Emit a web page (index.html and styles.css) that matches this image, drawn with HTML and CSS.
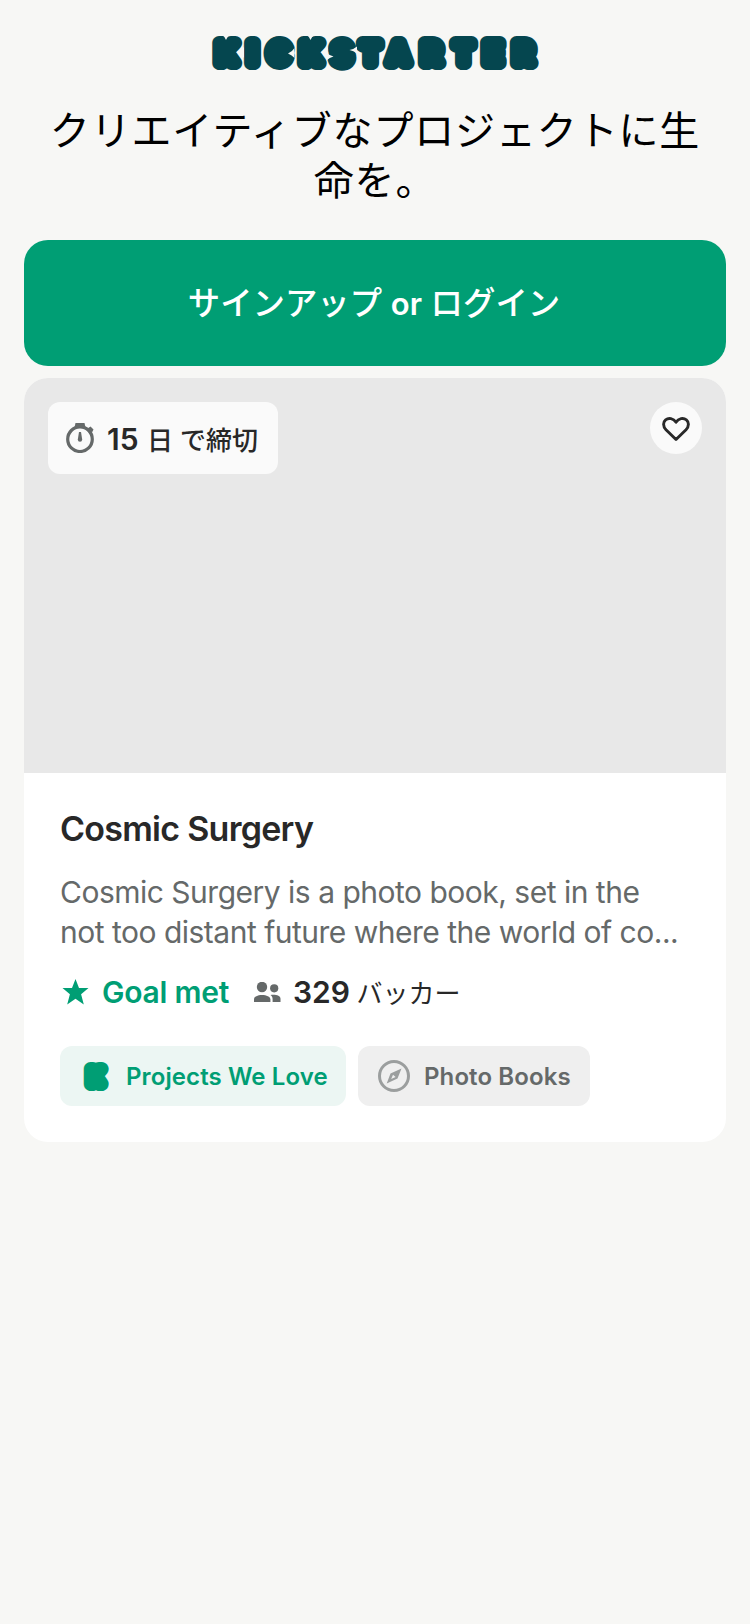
FILE: index.html
```html
<!DOCTYPE html>
<html lang="ja">
<head>
<meta charset="utf-8">
<title>Kickstarter</title>
<link rel="stylesheet" href="styles.css">
</head>
<body>
<main class="page">
  <svg class="logo" viewBox="0 0 330 36" role="img" aria-label="Kickstarter">
    <text class="wordmark" y="28.100" x="16.500 42.500 69 101 132 160.500 188.500 221.500 253.500 283 313.500">KICKSTARTER</text>
    <g class="notches">
      <path d="M12.500 0Q15 2 16 5Q17 2 19.500 0Z"/>
      <path d="M34 12Q30.500 16 26.500 17Q30.500 19 34 23Z"/>
      <path d="M97 0Q99.500 2 100.500 5Q101.500 2 104 0Z"/>
      <path d="M118 12Q115 16 111 17Q114 18.500 116.500 22Z"/>
      <path d="M84.500 13Q82 17 78 18.500Q82 20 84.500 23Z"/>
      <path d="M147 11.500Q143.500 14.500 139.500 15Q143.500 15.500 147 18.500Z"/>
      <path d="M116.500 17.500Q119.500 20.500 123.500 21.500Q119.500 22.500 116.500 25.500Z"/>
    </g>
  </svg>
  <h1 class="headline">クリエイティブなプロジェクトに生命を。</h1>
  <a class="cta"><span class="cta-label">サインアップ <b>or</b> ログイン</span></a>
  <article class="card">
    <div class="cover">
      <div class="deadline">
        <svg class="clock" viewBox="0 0 28 30"><circle cx="14" cy="16.2" r="12.3" fill="none" stroke="#656969" stroke-width="3.2"/><path d="M9.5 0h9l1 4.500h-11z" fill="#656969"/><path d="M21.500 5.500l3-2 3 3-1.500 3z" fill="#656969"/><path d="M13 9h2l1.200 7.500a2.200 2.200 0 1 1-4.400 0z" fill="#656969"/></svg>
        <span class="deadline-text"><b>15</b> <span class="unit">日 で締切</span></span>
      </div>
      <div class="save">
        <svg class="heart" viewBox="0 0 28 25"><path d="M14 22.500L4 12.700C0.700 9.300 1 5 3.600 2.900 6.700 0.500 11.300 1.300 14 5.200 16.700 1.300 21.300 0.500 24.400 2.900 27 5 27.300 9.300 24 12.700Z" fill="none" stroke="#282828" stroke-width="2.900" stroke-linejoin="round"/></svg>
      </div>
    </div>
    <div class="body">
      <h2 class="title">Cosmic Surgery</h2>
      <p class="blurb"><span class="line">Cosmic Surgery is a photo book, set in the</span><span class="line">not too distant future where the world of co...</span></p>
      <div class="stats">
        <svg class="star" viewBox="0 0 27 26"><path d="M13.500 0l3.500 9h9.500l-7.400 6.200 2.700 10.300-8.300-5.700-8.300 5.700 2.700-10.300L0.500 9H10z" fill="#009e74"/></svg>
        <span class="goal">Goal met</span>
        <svg class="people" viewBox="0 0 27 20"><g fill="#656969"><circle cx="8" cy="5" r="5.200"/><circle cx="20.200" cy="6.300" r="4.100"/><path d="M0 20v-2.500C0 14.500 3.600 13 8 13s8.400 1.500 8.400 4.500V20z"/><path d="M18.600 20v-3c0-1.700-.7-3-2.100-4 5.500-.6 10 .6 10 3.700V20z"/></g></svg>
        <span class="backers"><b>329</b> <span class="unit">バッカー</span></span>
      </div>
      <div class="tags">
        <div class="tag love">
          <svg class="kmark" viewBox="0 0 26 30"><text x="12.500" y="22.500">K</text></svg>
          <span>Projects We Love</span>
        </div>
        <div class="tag category">
          <svg class="compass" viewBox="0 0 32 32"><circle cx="16" cy="16" r="14.500" fill="none" stroke="#9b9e9e" stroke-width="3"/><path fill-rule="evenodd" d="M23.500 8.500L19.500 18.500 8.700 23.500 12.500 13.500ZM15 14.800l-1.800 4.300 4.400-2.100z" fill="#9b9e9e"/></svg>
          <span>Photo Books</span>
        </div>
      </div>
    </div>
  </article>
</main>
</body>
</html>
```

FILE: styles.css
```css
body {
  margin: 0;
  background: #f7f7f5;
  font-family: Inter, "Noto Sans CJK JP", sans-serif;
  color: #282828;
}
.page {
  display: flex;
  flex-direction: column;
  min-height: 1624px;
  padding: 35px 24px 0;
  box-sizing: border-box;
}
.logo {
  width: 330px;
  height: 36px;
  align-self: center;
  overflow: visible;
}
.wordmark {
  font: 500 27.500px Inter, sans-serif;
  text-anchor: middle;
  fill: #05464f;
  stroke: #05464f;
  stroke-width: 14px;
  stroke-linejoin: round;
}
.notches { fill: #f7f7f5; }
.headline {
  margin: 32px 0 0;
  padding: 0 20px;
  color: #000;
  font: 400 40px/50px "Noto Sans CJK JP", sans-serif;
  letter-spacing: 0.850px;
  text-align: center;
}
.cta {
  display: flex;
  align-items: center;
  justify-content: center;
  height: 126px;
  margin-top: 37px;
  padding-bottom: 6px;
  box-sizing: border-box;
  border-radius: 24px;
  background: #009e74;
  color: #fff;
  font-size: 32.400px;
  font-weight: 500;
}
.cta-label { margin-left: -2px; }
b { font-weight: 600; }
.cta b { font-size: 31px; }
.card {
  margin-top: 12px;
  border-radius: 24px;
  background: #fff;
  overflow: hidden;
}
.cover {
  display: flex;
  justify-content: space-between;
  align-items: flex-start;
  height: 395px;
  padding: 24px;
  box-sizing: border-box;
  background: #e8e8e8;
}
.deadline {
  display: flex;
  align-items: center;
  width: 230px;
  height: 72px;
  padding-left: 18px;
  gap: 13px;
  box-sizing: border-box;
  border-radius: 12px;
  background: #fafafa;
}
.clock { width: 28px; height: 30px; }
.deadline-text {
  padding-top: 3px;
  font-size: 30px;
  line-height: 40px;
  white-space: nowrap;
}
.unit { font-size: 26px; font-weight: 500; }
.backers .unit { margin-left: -2px; font-weight: 400; }
.save {
  display: flex;
  align-items: center;
  justify-content: center;
  width: 52px;
  height: 52px;
  padding-top: 2px;
  box-sizing: border-box;
  border-radius: 50%;
  background: #fafafa;
}
.heart { width: 28px; height: 25px; }
.body { padding: 36px; }
.title {
  margin: 0;
  font-size: 34px;
  line-height: 40px;
  font-weight: 600;
  letter-spacing: -0.730px;
}
.blurb {
  margin: 23px 0 0;
  color: #656969;
  font-size: 30px;
  line-height: 40px;
  letter-spacing: -0.500px;
}
.line { display: block; white-space: nowrap; }
.stats {
  display: flex;
  align-items: center;
  height: 40px;
  margin-top: 20px;
  font-size: 30px;
  line-height: 40px;
  white-space: nowrap;
}
.star { width: 27px; height: 26px; margin: 0 13px 0 2px; }
.goal { width: 151px; color: #009e74; font-weight: 600; letter-spacing: -0.250px; }
.people { width: 27px; height: 20px; margin: 0 12px 0 1px; }
.backers { padding-top: 1px; }
.tags { display: flex; gap: 12px; margin-top: 34px; }
.tag {
  display: flex;
  align-items: center;
  height: 60px;
  box-sizing: border-box;
  border-radius: 12px;
  font-size: 24px;
  line-height: 32px;
  font-weight: 600;
  letter-spacing: 0.100px;
  white-space: nowrap;
}
.tag span { padding-top: 1px; }
.love { width: 286px; padding-left: 23px; gap: 17px; background: #ecf6f3; color: #009e74; }
.category { width: 232px; padding-left: 20px; gap: 14px; background: #efefef; color: #656969; }
.kmark { width: 26px; height: 30px; overflow: visible; }
.kmark text {
  font: 400 19.500px Inter, sans-serif;
  letter-spacing: 0;
  text-anchor: middle;
  fill: #009e74;
  stroke: #009e74;
  stroke-width: 14px;
  stroke-linejoin: round;
}
.compass { width: 32px; height: 32px; }
```
